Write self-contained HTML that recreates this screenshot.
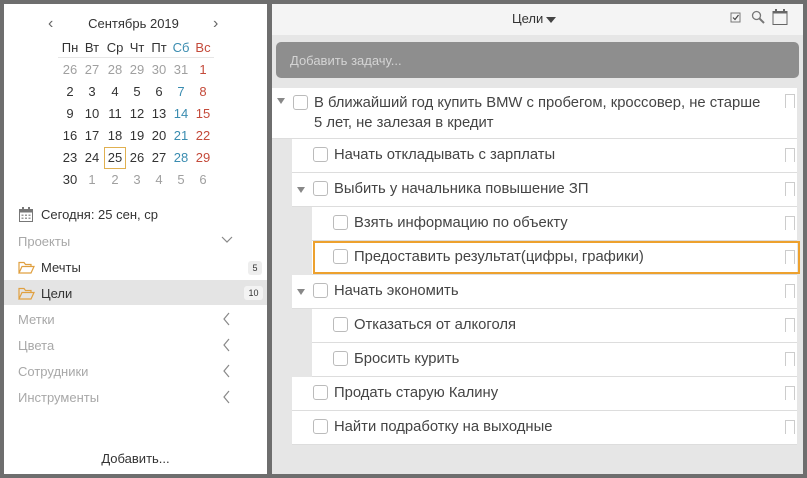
<!DOCTYPE html>
<html><head><meta charset="utf-8"><style>
*{box-sizing:border-box;margin:0;padding:0}
body{width:807px;height:478px;background:#6e6e6e;font-family:"Liberation Sans","DejaVu Sans",sans-serif;font-size:13px;color:#333;position:relative;overflow:hidden}
.a{position:absolute}
#left{left:4px;top:4px;width:263px;height:470px;background:#fff}
#right{left:272px;top:4px;width:531px;height:470px;background:#e6e6e6}
.d{position:absolute;width:22px;text-align:center;font-size:13px}
.g{color:#a0a0a0}.b{color:#3a8cb0}.r{color:#c44a3a}
.nav{position:absolute;left:14px;font-size:13px;color:#a8a8a8}
.row{position:absolute;background:#fff;border-bottom:1px solid #ddd;height:34px}
.cb{position:absolute;width:15px;height:15px;border:1px solid #bbb;border-radius:3px;background:#fff}
.tx{position:absolute;font-size:14.8px;color:#444;white-space:nowrap}
.tri{position:absolute;width:0;height:0;border-left:4.5px solid transparent;border-right:4.5px solid transparent;border-top:6px solid #888}
.bm{position:absolute;right:8px;width:10px;height:14px;border:1px solid #ccc;border-bottom:none}
.bm:after{content:"";position:absolute;left:0;bottom:-1px;width:0;height:0;border-left:4px solid transparent;border-right:4px solid transparent;border-bottom:4px solid #fff}
</style></head><body>
<div id="left" class="a">
<div class="a" style="left:44px;top:11px;font-size:16px;color:#666">&#8249;</div>
<div class="a" style="left:209px;top:11px;font-size:16px;color:#666">&#8250;</div>
<div class="a" style="left:0;width:263px;top:12px;text-align:center;font-size:13px;padding-right:4px">Сентябрь 2019</div>
<div class="a" style="left:54px;top:53px;width:156px;height:1px;background:#e6e6e6"></div>
</div>
<div id="cal"></div>
<div class="a" style="left:104px;top:147px;width:22px;height:22px;border:1px solid #e0b050"></div>
<svg class="a" style="left:19px;top:207px" width="14" height="15" viewBox="0 0 14 15"><rect x="0.5" y="2.5" width="13" height="12" fill="none" stroke="#777"/><rect x="0.5" y="2.5" width="13" height="3" fill="#777"/><rect x="3" y="0" width="2" height="4" fill="#777"/><rect x="9" y="0" width="2" height="4" fill="#777"/><g fill="#999"><rect x="2.5" y="7.5" width="2" height="1.5"/><rect x="6" y="7.5" width="2" height="1.5"/><rect x="9.5" y="7.5" width="2" height="1.5"/><rect x="2.5" y="10.5" width="2" height="1.5"/><rect x="6" y="10.5" width="2" height="1.5"/><rect x="9.5" y="10.5" width="2" height="1.5"/></g></svg>
<div class="a" style="left:41px;top:207px;font-size:13px">Сегодня: 25 сен, ср</div>
<div class="nav" style="left:18px;top:234px">Проекты</div>
<svg class="a" style="left:221px;top:236px" width="12" height="8"><path d="M1 1 L6 6 L11 1" fill="none" stroke="#888" stroke-width="1.2"/></svg>
<div class="a" style="left:4px;top:280px;width:263px;height:25px;background:#e4e4e4"></div>
<svg class="a" style="left:18px;top:261px" width="17" height="13"><path d="M1 12 V1.5 H6 L7.5 3.5 H13 V5.5 M1 12 L4 5.5 H16 L13 12 Z" fill="none" stroke="#e0a040" stroke-width="1.2"/></svg>
<div class="a" style="left:41px;top:260px;font-size:13px">Мечты</div>
<div class="a" style="left:248px;top:261px;width:14px;height:14px;background:#eee;border-radius:3px;font-size:9px;text-align:center;line-height:14px">5</div>
<svg class="a" style="left:18px;top:287px" width="17" height="13"><path d="M1 12 V1.5 H6 L7.5 3.5 H13 V5.5 M1 12 L4 5.5 H16 L13 12 Z" fill="none" stroke="#e0a040" stroke-width="1.2"/></svg>
<div class="a" style="left:41px;top:286px;font-size:13px">Цели</div>
<div class="a" style="left:244px;top:286px;width:19px;height:14px;background:#f3f3f3;border-radius:3px;font-size:9px;text-align:center;line-height:14px">10</div>
<div class="nav" style="left:18px;top:312px">Метки</div>
<div class="nav" style="left:18px;top:338px">Цвета</div>
<div class="nav" style="left:18px;top:364px">Сотрудники</div>
<div class="nav" style="left:18px;top:390px">Инструменты</div>
<svg class="a" style="left:222px;top:312px" width="8" height="92"><g fill="none" stroke="#888" stroke-width="1.2"><path d="M7 1 L2 7 L7 13"/><path d="M7 27 L2 33 L7 39"/><path d="M7 53 L2 59 L7 65"/><path d="M7 79 L2 85 L7 91"/></g></svg>
<div class="a" style="left:4px;width:263px;top:451px;text-align:center;font-size:13px;color:#333">Добавить...</div>

<div id="right" class="a"></div>
<div class="a" style="left:272px;top:4px;width:531px;height:31px;background:#f4f4f4"></div>
<div class="a" style="left:512px;top:11px;font-size:13px">Цели</div>
<div class="a" style="left:546px;top:17px;width:0;height:0;border-left:5px solid transparent;border-right:5px solid transparent;border-top:6px solid #444"></div>
<svg class="a" style="left:730px;top:12px" width="12" height="12"><rect x="1" y="1" width="9" height="9" fill="none" stroke="#777"/><path d="M3 5.5 L5 7.5 L8.5 3" fill="none" stroke="#444" stroke-width="1.2"/></svg>
<svg class="a" style="left:751px;top:10px" width="14" height="14"><circle cx="5.5" cy="5.5" r="4" fill="none" stroke="#777" stroke-width="1.3"/><path d="M8.5 8.5 L13 13" stroke="#777" stroke-width="2"/></svg>
<svg class="a" style="left:772px;top:9px" width="16" height="16"><rect x="1" y="2.5" width="14" height="13" fill="none" stroke="#666"/><rect x="1" y="2.5" width="14" height="2" fill="#666"/><rect x="3" y="0" width="2" height="4" fill="#666"/><rect x="11" y="0" width="2" height="4" fill="#666"/></svg>
<div class="a" style="left:276px;top:42px;width:523px;height:36px;background:#8e8e8e;border-radius:5px"></div>
<div class="a" style="left:290px;top:53px;font-size:13px;color:#d4d4d4">Добавить задачу...</div>

<div class="row" style="left:272px;top:88px;width:525px;height:51px"></div>
<div class="tri" style="left:277px;top:98px"></div>
<div class="cb" style="left:293px;top:95px"></div>
<div class="tx" style="left:314px;top:93px;line-height:20px">В ближайший год купить BMW с пробегом, кроссовер, не старше<br>5 лет, не залезая в кредит</div>
<div class="bm" style="left:785px;top:94px"></div>
<div id="rows"></div>
<div class="a" style="left:313px;top:241px;width:487px;height:33px;border:2px solid #eda12e"></div>

<script>
var c=document.getElementById('cal'),h='';
var xs=[70,92,115,137,159,181,203];
var hd=['Пн','Вт','Ср','Чт','Пт','Сб','Вс'];
for(var i=0;i<7;i++)h+='<div class="d '+(i==5?'b':i==6?'r':'')+'" style="left:'+(xs[i]-11)+'px;top:40px">'+hd[i]+'</div>';
var days=[[26,27,28,29,30,31,1],[2,3,4,5,6,7,8],[9,10,11,12,13,14,15],[16,17,18,19,20,21,22],[23,24,25,26,27,28,29],[30,1,2,3,4,5,6]];
for(var r=0;r<6;r++)for(var i=0;i<7;i++){var cl='';if((r==0&&i<6)||(r==5&&i>0))cl='g';else if(i==5)cl='b';else if(i==6)cl='r';
h+='<div class="d '+cl+'" style="left:'+(xs[i]-11)+'px;top:'+(62+r*22)+'px">'+days[r][i]+'</div>';}
c.innerHTML=h;
var R=[[1,0,'Начать откладывать с зарплаты'],[1,1,'Выбить у начальника повышение ЗП'],[2,0,'Взять информацию по объекту'],[2,0,'Предоставить результат(цифры, графики)'],[1,1,'Начать экономить'],[2,0,'Отказаться от алкоголя'],[2,0,'Бросить курить'],[1,0,'Продать старую Калину'],[1,0,'Найти подработку на выходные']];
h='';
for(var k=0;k<R.length;k++){var y=139+k*34;var x=R[k][0]==1?292:312;
h+='<div class="row" style="left:'+x+'px;top:'+y+'px;width:'+(797-x)+'px"></div>';
var cx=x+21;if(R[k][1])h+='<div class="tri" style="left:'+(x+5)+'px;top:'+(y+14)+'px"></div>';
h+='<div class="cb" style="left:'+cx+'px;top:'+(y+8)+'px"></div>';
h+='<div class="tx" style="left:'+(cx+21)+'px;top:'+(y+8)+'px">'+R[k][2]+'</div>';
h+='<div class="bm" style="left:785px;top:'+(y+9)+'px"></div>';}
document.getElementById('rows').innerHTML=h;
</script>
</body></html>
